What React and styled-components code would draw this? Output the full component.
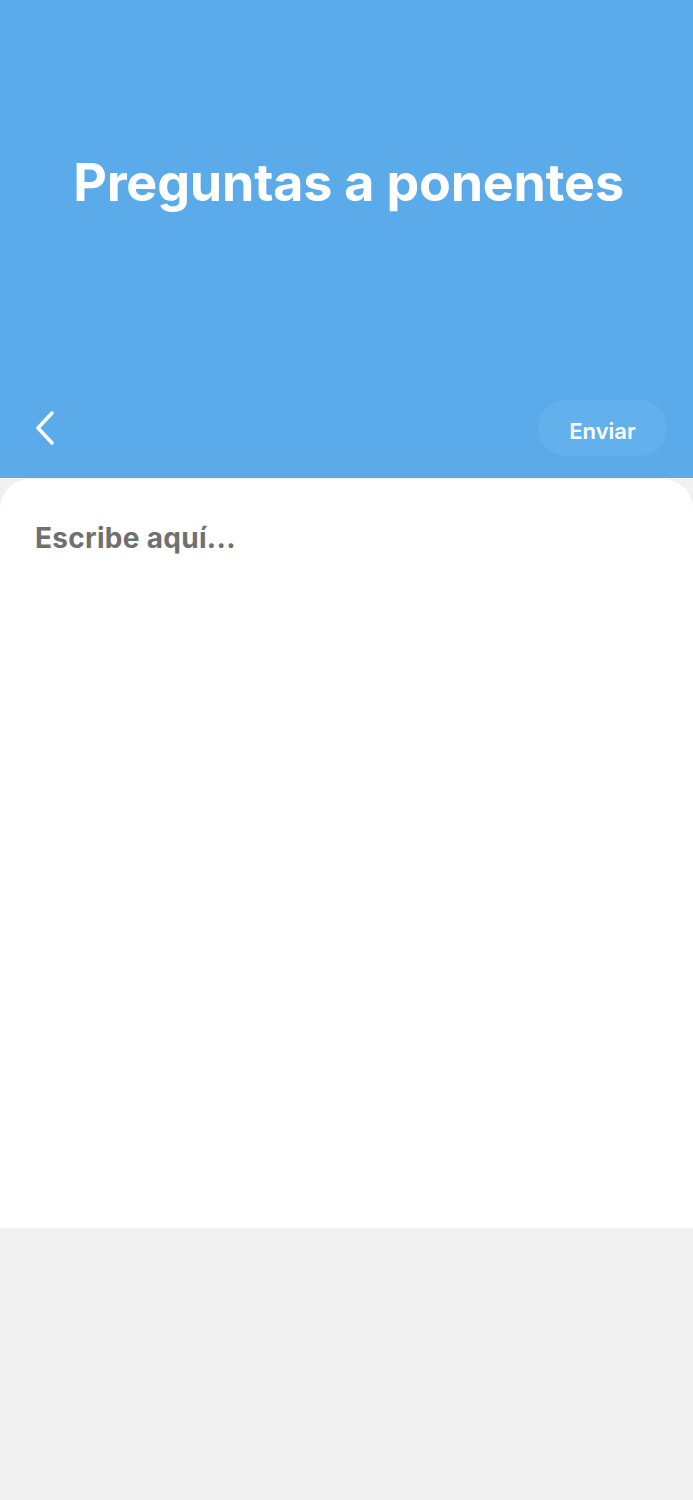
import React from 'react'
import styled, { createGlobalStyle } from 'styled-components'

const Global = createGlobalStyle`
  html, body {
    margin: 0;
    padding: 0;
    background: #f1f1f1;
    font-family: "Inter", "Noto Sans", sans-serif;
  }
`

const Page = styled.div`
  width: 693px;
  min-height: 1500px;
  background: #f1f1f1;
  display: flex;
  flex-direction: column;
`

const Header = styled.header`
  height: 478px;
  background: #5babea;
  display: flex;
  flex-direction: column;
  box-sizing: border-box;
  padding: 0 26px 22px 30px;
`

const Title = styled.h1`
  margin: 0;
  padding-top: 151px;
  flex: 1;
  text-align: center;
  color: #fff;
  font-size: 52px;
  font-weight: 700;
  letter-spacing: -0.2px;
`

const Toolbar = styled.div`
  display: flex;
  align-items: center;
  justify-content: space-between;
`

const BackButton = styled.button`
  border: 0;
  background: none;
  padding: 0;
  width: 30px;
  height: 40px;
  display: flex;
  align-items: center;
  justify-content: center;
  cursor: pointer;
`

const SendButton = styled.button`
  border: 0;
  height: 56px;
  width: 129px;
  border-radius: 28px;
  background: #63b1ec;
  color: #fff;
  font-family: inherit;
  font-size: 22px;
  font-weight: 600;
  padding: 5px 0 0;
  cursor: pointer;
`

const Card = styled.main`
  margin-top: 1px;
  height: 749px;
  background: #fff;
  border-radius: 30px 30px 0 0;
  box-sizing: border-box;
  padding: 42px 35px;
`

const Input = styled.textarea`
  width: 100%;
  height: 100%;
  border: 0;
  outline: none;
  resize: none;
  padding: 0;
  font-family: inherit;
  font-size: 28px;
  font-weight: 700;
  letter-spacing: 0.3px;
  color: #333;
  background: transparent;

  &::placeholder {
    color: #707070;
  }
`

const Chevron = () => (
  <svg width="20" height="34" viewBox="0 0 20 34" fill="none">
    <path d="M17 2 L3 17 L17 32" stroke="#fff" strokeWidth="3.5" strokeLinecap="round" strokeLinejoin="round" />
  </svg>
)

export default function App() {
  return (
    <Page>
      <Global />
      <Header>
        <Title>Preguntas a ponentes</Title>
        <Toolbar>
          <BackButton aria-label="Volver"><Chevron /></BackButton>
          <SendButton>Enviar</SendButton>
        </Toolbar>
      </Header>
      <Card>
        <Input placeholder="Escribe aquí..." />
      </Card>
    </Page>
  )
}
